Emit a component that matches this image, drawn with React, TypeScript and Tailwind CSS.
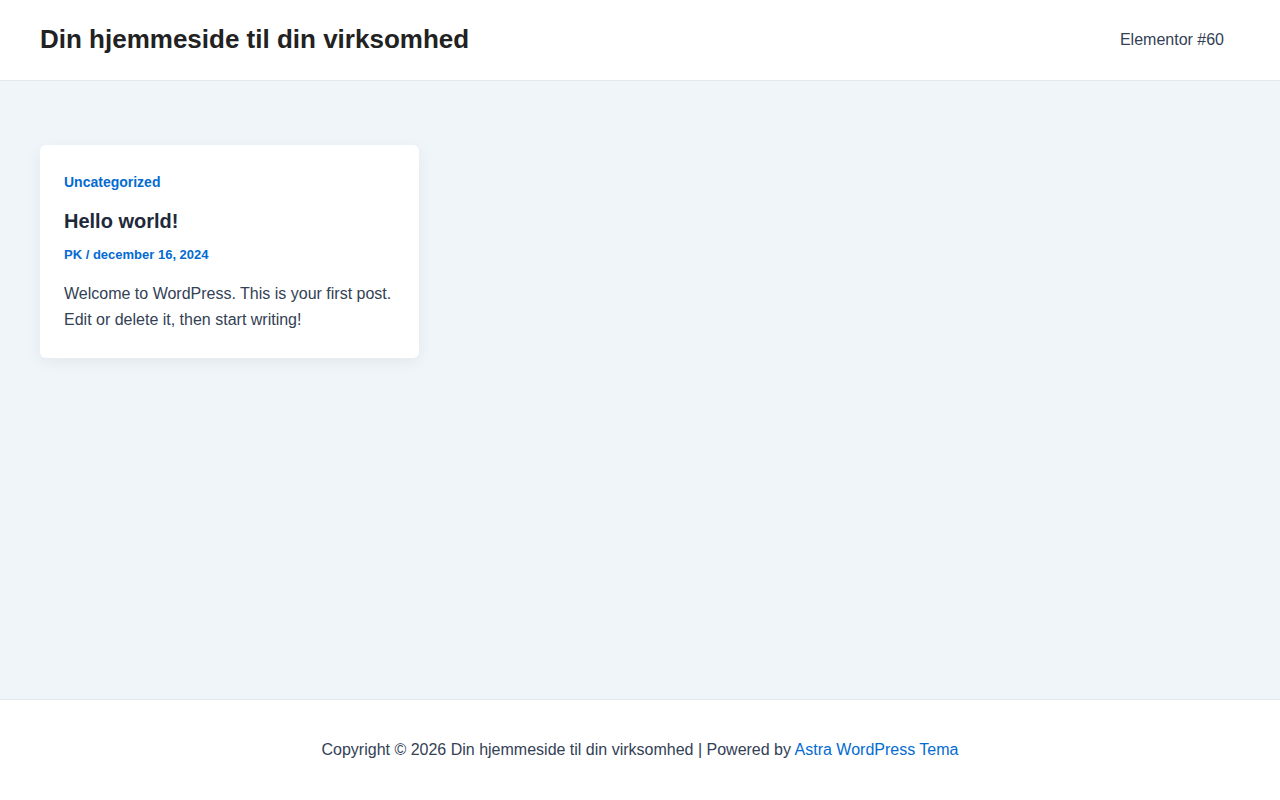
export default function App() {
  return (
    <div
      className="flex min-h-screen flex-col bg-white text-[#334155]"
      style={{ fontFamily: '"Liberation Sans", Arial, sans-serif' }}
    >
      {/* Header */}
      <header className="flex h-[81px] items-center justify-between border-b border-[#e2e8f0] bg-white px-10">
        <a className="mb-[2px] text-[26px] font-bold leading-none text-[#222222]">
          Din hjemmeside til din virksomhed
        </a>
        <nav className="pr-4 text-base text-[#334155]">Elementor #60</nav>
      </header>

      {/* Main */}
      <main className="h-[618px] bg-[#f0f5fa] px-10 pt-16">
        <article className="w-[379px] rounded-md bg-white px-6 pt-[27px] pb-[25px] shadow-[0_4px_16px_rgba(15,23,42,0.06)]">
          <div className="text-sm font-bold leading-5 text-[#046bd2]">Uncategorized</div>
          <h2 className="mt-[17px] text-[20px] font-bold leading-6 text-[#1e293b]">Hello world!</h2>
          <div className="mt-[12px] text-[13px] font-bold leading-5 text-[#046bd2]">
            PK / december 16, 2024
          </div>
          <p className="mt-[16px] text-base leading-[26px] text-[#334155]">
            Welcome to WordPress. This is your first post. Edit or delete it, then start writing!
          </p>
        </article>
      </main>

      {/* Footer */}
      <footer className="flex h-[101px] items-center justify-center border-t border-[#e2e8f0] bg-white text-base">
        <p>
          Copyright © 2026 Din hjemmeside til din virksomhed | Powered by{" "}
          <a className="text-[#046bd2]">Astra WordPress Tema</a>
        </p>
      </footer>
    </div>
  );
}
